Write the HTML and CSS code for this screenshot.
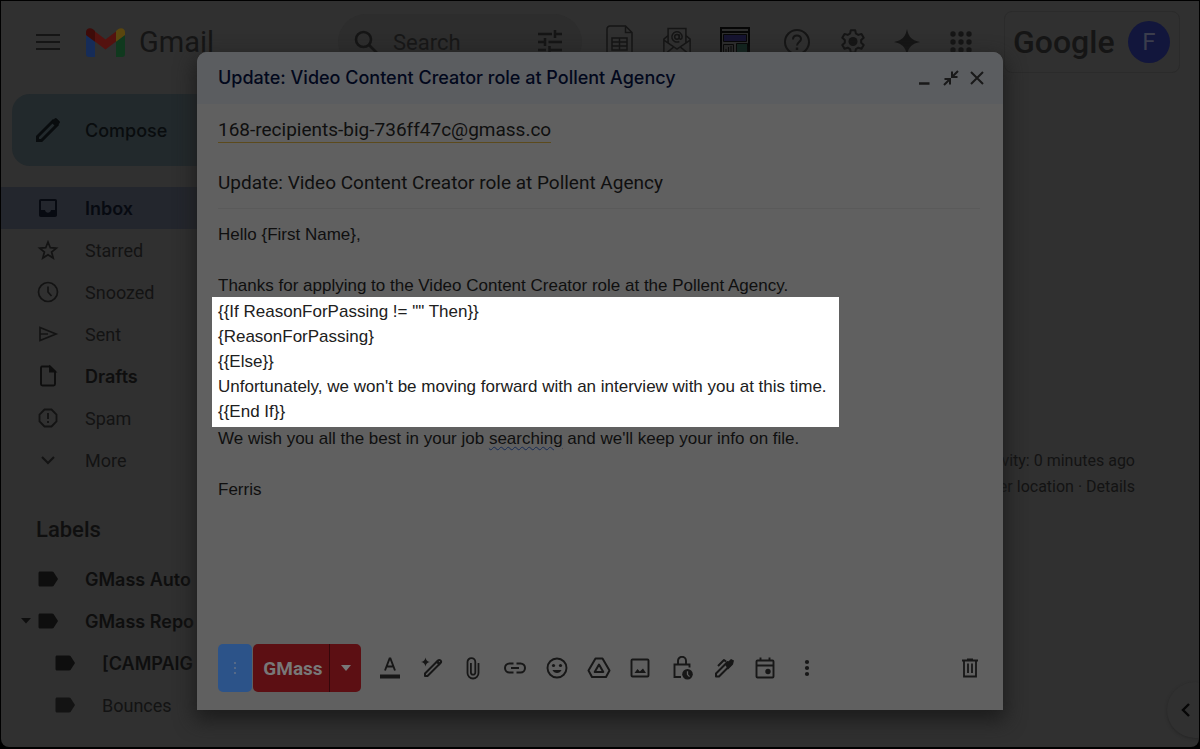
FILE: index.html
```html
<!DOCTYPE html>
<html lang="en">
<head>
<meta charset="utf-8">
<meta name="viewport" content="width=device-width, initial-scale=1">
<title>Gmail</title>
<link rel="stylesheet" href="styles.css">
</head>
<body>
<div class="frame">
<div class="app">
  <header class="topbar">
    <button class="icon-btn menu" aria-label="Main menu"><svg width="24" height="18" viewBox="0 0 24 18" fill="none" stroke="currentColor" stroke-width="2"><path d="M0 2h24M0 9h24M0 16h24"/></svg></button>
    <a class="brand" href="#">
      <svg width="39" height="29" viewBox="0 0 39 29"><path fill="#162c58" d="M0 7l9 6.500V29H3a3 3 0 0 1-3-3z"/><path fill="#10391e" d="M39 7l-9 6.500V29h6a3 3 0 0 0 3-3z"/><path fill="#54120f" d="M9 13.500V3.500l10.500 8 10.500-8v10L19.500 21.500z"/><path fill="#3e0b09" d="M0 4c0-3.500 4-5 7-2.700l2 1.700v10.700L0 7z"/><path fill="#5a460e" d="M39 4c0-3.500-4-5-7-2.700l-2 1.700v10.700L39 7z"/></svg>
      <span>Gmail</span>
    </a>
    <form class="search">
      <svg width="25" height="25" viewBox="0 0 25 25" fill="none" stroke="currentColor" stroke-width="2.600"><circle cx="9.500" cy="9.500" r="7.500"/><path d="M15 15l8.500 8.500"/></svg>
      <input type="text" placeholder="Search" aria-label="Search mail">
      <button class="icon-btn" type="button" aria-label="Search options"><svg width="24" height="24" viewBox="0 0 24 24" fill="none" stroke="currentColor" stroke-width="2.500"><path d="M0 4h14M17 4h7M17 0v8M0 12h7M7 8v8M10.500 12H24M0 20h8M11.500 20H24M11.500 16v8"/></svg></button>
    </form>
    <div class="tools extensions">
      <button class="icon-btn tool" aria-label="Spreadsheet"><svg width="27" height="34" viewBox="0 0 27 34" fill="none" stroke="currentColor" stroke-width="1.500"><path d="M4 1h15.500L26 7.500V30a3 3 0 0 1-3 3H4a3 3 0 0 1-3-3V4a3 3 0 0 1 3-3zM19.500 1v6.500H26M6 13h15v12H6zM6 17h15M6 21h15M13.500 13v12"/></svg></button>
      <button class="icon-btn tool" aria-label="Email campaign"><svg width="30" height="30" viewBox="0 0 30 32" fill="none" stroke="currentColor" stroke-width="1.600"><path d="M5.500 17V1.500h19V17M5.500 9L1 13v17h28V13l-4.500-4M1 14l14 9.500L29 14M1 30l11-9M29 30l-11-9"/><circle cx="15" cy="10.500" r="2.500"/><path d="M17.500 8v3.500c0 2.500 3 2 3-1a5.500 5.500 0 1 0-3 5"/></svg></button>
      <button class="icon-btn tool" aria-label="Dashboard"><svg width="30" height="30" viewBox="0 0 30 30"><path fill="#060606" d="M0 0h30v30H0z"/><path fill="#2e2e2e" d="M2 2h26v2H2zM2 6h26v22H2z"/><path fill="#161430" stroke="#080808" d="M3.500 7.500h23v7h-23z"/><path stroke="#080808" fill="#292929" d="M3.500 17.500h10v10h-10z"/><path fill="#12251f" stroke="#080808" d="M16.500 16.500h11v11h-11z"/><path stroke="#090909" d="M6 25v-3M8.500 25v-5M11 25v-6"/></svg></button>
    </div>
    <div class="tools">
      <button class="icon-btn tool" aria-label="Support"><svg width="26" height="26" viewBox="0 0 26 26" fill="none" stroke="currentColor" stroke-width="2"><circle cx="13" cy="13" r="12"/><path d="M9 10.500c0-5.500 8-5 8-.5 0 3-4 3-4 6.500"/><path d="M13 18.500v2.500" stroke-width="2.400"/></svg></button>
      <button class="icon-btn tool narrow" aria-label="Settings"><svg width="26" height="26" viewBox="0 0 26 26"><path fill="none" stroke="currentColor" stroke-width="2" stroke-linejoin="round" d="M10.800 1.200h4.400l.7 3.300 2.400 1.400 3.200-1 2.200 3.800-2.500 2.200v2.800l2.500 2.200-2.200 3.800-3.200-1-2.400 1.400-.7 3.300h-4.400l-.7-3.300-2.400-1.400-3.200 1-2.200-3.800 2.500-2.200v-2.800L2.300 8.700l2.200-3.800 3.200 1 2.400-1.400z"/><circle cx="13" cy="12.500" r="4.500" fill="currentColor"/></svg></button>
      <button class="icon-btn tool narrow" aria-label="Assistant"><svg width="26" height="26" viewBox="0 0 26 26" fill="currentColor"><path d="M13 0c1.500 8 5 11.500 13 13-8 1.500-11.500 5-13 13-1.500-8-5-11.500-13-13 8-1.500 11.500-5 13-13z"/></svg></button>
      <button class="icon-btn tool narrow" aria-label="Apps"><svg width="22" height="22" viewBox="0 0 22 22" fill="currentColor"><circle cx="3" cy="3" r="2.700"/><circle cx="11" cy="3" r="2.700"/><circle cx="19" cy="3" r="2.700"/><circle cx="3" cy="11" r="2.700"/><circle cx="11" cy="11" r="2.700"/><circle cx="19" cy="11" r="2.700"/><circle cx="3" cy="19" r="2.700"/><circle cx="11" cy="19" r="2.700"/><circle cx="19" cy="19" r="2.700"/></svg></button>
    </div>
    <div class="account"><span class="google">Google</span><button class="avatar" aria-label="Account">F</button></div>
  </header>

  <div class="columns">
    <aside class="sidebar">
      <button class="compose"><svg width="24" height="24" viewBox="0 0 24 24" fill="none" stroke="currentColor" stroke-width="3"><path d="M1.500 22.500v-4L17 3l4 4L5.500 22.500z"/><path fill="currentColor" stroke-width="1" d="M15.500 4L19 .8c.5-.5 1-.5 1.500 0l2.700 2.700c.5.500.5 1 0 1.500L20 8.500z"/></svg><span>Compose</span></button>
      <nav class="folders">
        <a class="row active" href="#"><svg width="24" height="24" viewBox="0 0 24 24"><path fill="currentColor" fill-rule="evenodd" d="M5 3h14c1.300 0 2 .8 2 2v14c0 1.200-.8 2-2 2H5c-1.300 0-2-.8-2-2V5c0-1.200.8-2 2-2zm0 2v9h4c.5 3.500 5.500 3.500 6 0h4V5z"/></svg><span>Inbox</span></a>
        <a class="row" href="#"><svg width="24" height="24" viewBox="0 0 24 24" fill="none" stroke="currentColor" stroke-width="1.700"><path d="M12 4l2.300 5.700 6 .4-4.700 3.900 1.600 6-5.200-3.300L6.800 20l1.600-6-4.700-3.900 6-.4z"/></svg><span>Starred</span></a>
        <a class="row" href="#"><svg width="24" height="24" viewBox="0 0 24 24" fill="none" stroke="currentColor" stroke-width="1.700"><circle cx="12" cy="12" r="9.500"/><path d="M12 6.500V12l3.500 4"/></svg><span>Snoozed</span></a>
        <a class="row" href="#"><svg width="24" height="24" viewBox="0 0 24 24" fill="none" stroke="currentColor" stroke-width="1.700"><path d="M4 5.500L20 12 4 18.500zM4 12h8"/></svg><span>Sent</span></a>
        <a class="row strong" href="#"><svg width="24" height="24" viewBox="0 0 24 24" fill="none" stroke="currentColor" stroke-width="1.900"><path d="M6 2.500h8l5 5V20c0 .8-.7 1.500-1.500 1.500h-11c-.8 0-1.500-.7-1.500-1.500V4c0-.8.4-1.500 1-1.500z"/><path fill="currentColor" d="M14 3v4.500h5z"/></svg><span>Drafts</span></a>
        <a class="row" href="#"><svg width="24" height="24" viewBox="0 0 24 24" fill="none" stroke="currentColor" stroke-width="1.800"><path d="M8.500 3.500h7l5 5v7l-5 5h-7l-5-5v-7z"/><path d="M12 7v6M12 15v2"/></svg><span>Spam</span></a>
        <a class="row" href="#"><svg width="24" height="24" viewBox="0 0 24 24" fill="none" stroke="currentColor" stroke-width="2"><path d="M6 9l6 6 6-6"/></svg><span>More</span></a>
      </nav>
      <h2 class="labels-title">Labels</h2>
      <nav class="labels">
        <a class="row strong" href="#"><svg width="24" height="24" viewBox="0 0 24 24" fill="currentColor"><path d="M4 4.500h12c.8 0 1.300.3 1.700.8L22 12l-4.300 6.700c-.4.500-.9.800-1.700.8H4c-.8 0-1.500-.7-1.500-1.500V6c0-.8.700-1.500 1.500-1.500z"/></svg><span>GMass Auto</span></a>
        <a class="row strong parent" href="#"><svg class="caret" width="10" height="6" viewBox="0 0 10 6" fill="currentColor"><path d="M0 0h10L5 5.500z"/></svg><svg width="24" height="24" viewBox="0 0 24 24" fill="currentColor"><path d="M4 4.500h12c.8 0 1.300.3 1.700.8L22 12l-4.300 6.700c-.4.500-.9.800-1.700.8H4c-.8 0-1.500-.7-1.500-1.500V6c0-.8.700-1.500 1.500-1.500z"/></svg><span>GMass Repo</span></a>
        <a class="row strong child" href="#"><svg width="24" height="24" viewBox="0 0 24 24" fill="currentColor"><path d="M4 4.500h12c.8 0 1.300.3 1.700.8L22 12l-4.300 6.700c-.4.500-.9.800-1.700.8H4c-.8 0-1.500-.7-1.500-1.500V6c0-.8.700-1.500 1.500-1.500z"/></svg><span>[CAMPAIG</span></a>
        <a class="row child" href="#"><svg width="24" height="24" viewBox="0 0 24 24" fill="currentColor"><path d="M4 4.500h12c.8 0 1.300.3 1.700.8L22 12l-4.300 6.700c-.4.500-.9.800-1.700.8H4c-.8 0-1.500-.7-1.500-1.500V6c0-.8.700-1.500 1.500-1.500z"/></svg><span>Bounces</span></a>
      </nav>
    </aside>
    <main class="mail">
      <p class="activity">activity: 0 minutes ago<br>other location · <a href="#">Details</a></p>
    </main>
  </div>

  <button class="side-toggle" aria-label="Show side panel"><svg width="9" height="14" viewBox="0 0 9 14" fill="none" stroke="currentColor" stroke-width="2.400"><path d="M8 1L2 7l6 6"/></svg></button>

  <section class="dialog" role="dialog" aria-labelledby="dialog-title">
    <header class="dialog-head">
      <h1 id="dialog-title">Update: Video Content Creator role at Pollent Agency</h1>
      <div class="window-btns">
        <button class="icon-btn" aria-label="Minimize"><svg width="16" height="16" viewBox="0 0 16 16" stroke="currentColor" stroke-width="2.500"><path d="M3 13.500h10.500"/></svg></button>
        <button class="icon-btn" aria-label="Exit full screen"><svg width="16" height="16" viewBox="0 0 16 16" fill="none" stroke="currentColor" stroke-width="2"><path d="M15 1L9.500 6.500M9 1.500V7h5.500M1 15l5.500-5.500M1.500 9H7v5.500"/></svg></button>
        <button class="icon-btn" aria-label="Close"><svg width="14" height="14" viewBox="0 0 14 14" stroke="currentColor" stroke-width="2"><path d="M1 1l12 12M13 1L1 13"/></svg></button>
      </div>
    </header>
    <div class="field recipients"><span class="address">168-recipients-big-736ff47c@gmass.co</span></div>
    <div class="field subject"><input type="text" aria-label="Subject" value="Update: Video Content Creator role at Pollent Agency"></div>
    <div class="message" role="textbox" aria-label="Message body" aria-multiline="true">
      <p>Hello {First Name},</p>
      <p class="para">Thanks for applying to the Video Content Creator role at the Pollent Agency.</p>
      <p class="spotlight">{{If ReasonForPassing != "" Then}}<br>{ReasonForPassing}<br>{{Else}}<br>Unfortunately, we won't be moving forward with an interview with you at this time.<br>{{End If}}</p>
      <p>We wish you all the best in your job <span class="grammar">searching</span> and we'll keep your info on file.</p>
      <p class="para">Ferris</p>
    </div>
    <footer class="toolbar">
      <button class="drag" aria-label="GMass options"><svg width="4" height="14" viewBox="0 0 4 14" fill="currentColor"><circle cx="2" cy="2" r="1.100"/><circle cx="2" cy="7" r="1.100"/><circle cx="2" cy="12" r="1.100"/></svg></button>
      <div class="gmass"><button class="send">GMass</button><button class="more" aria-label="GMass settings"><svg width="10" height="6" viewBox="0 0 10 6" fill="currentColor"><path d="M0 0h10L5 6z"/></svg></button></div>
      <div class="format">
        <button class="icon-btn" aria-label="Formatting options"><svg width="24" height="24" viewBox="0 0 24 24"><path fill="none" stroke="currentColor" stroke-width="1.900" d="M7 14.500L11.600 2.500h.8L17 14.500M8.700 10.500h6.600"/><path fill="currentColor" d="M2 18.500h20v4H2z"/></svg></button>
        <button class="icon-btn" aria-label="Help me write"><svg width="24" height="24" viewBox="0 0 24 24"><path fill="currentColor" d="M5.500 1.500c.7 3 1.500 3.800 4.500 4.500-3 .7-3.800 1.500-4.500 4.500C4.800 7.500 4 6.700 1 6c3-.7 3.800-1.500 4.500-4.500z"/><path fill="none" stroke="currentColor" stroke-width="2" stroke-linejoin="round" d="M5 17.500L18 4.500c.8-.8 1.700-.8 2.500 0s.8 1.700 0 2.500L7.500 20H5z"/><path stroke="currentColor" stroke-width="2.500" d="M16.500 5l3.500 3.500"/></svg></button>
        <button class="icon-btn" aria-label="Attach files"><svg width="24" height="24" viewBox="0 0 24 24" fill="none" stroke="currentColor" stroke-width="1.800"><path d="M17.500 7v10a5.500 5.500 0 0 1-11 0V6a3.900 3.900 0 0 1 7.800 0v10.500a2.200 2.200 0 0 1-4.400 0V7"/></svg></button>
        <button class="icon-btn" aria-label="Insert link"><svg width="24" height="24" viewBox="0 0 24 24" fill="none" stroke="currentColor" stroke-width="2"><path d="M10.500 7.500h-4a4.500 4.500 0 0 0 0 9h4M13.500 7.500h4a4.500 4.500 0 0 1 0 9h-4M8 12h8"/></svg></button>
        <button class="icon-btn" aria-label="Insert emoji"><svg width="24" height="24" viewBox="0 0 24 24"><circle cx="12" cy="12" r="9.500" fill="none" stroke="currentColor" stroke-width="1.900"/><circle cx="8.500" cy="9.500" r="1.600" fill="currentColor"/><circle cx="15.500" cy="9.500" r="1.600" fill="currentColor"/><path fill="currentColor" d="M7.500 14h9c-1.500 4-7.500 4-9 0z"/></svg></button>
        <button class="icon-btn" aria-label="Insert from Drive"><svg width="24" height="24" viewBox="0 0 24 24" fill="none" stroke="currentColor" stroke-width="2" stroke-linejoin="round"><path d="M8.500 2.500h7l7 12-3.500 6.500H5l-3.500-6.500zM12 8.500l4.300 7.500H7.700z"/></svg></button>
        <button class="icon-btn" aria-label="Insert photo"><svg width="24" height="24" viewBox="0 0 24 24"><rect x="3.500" y="3.500" width="17" height="17" rx="1" fill="none" stroke="currentColor" stroke-width="1.900"/><path fill="currentColor" d="M6.500 17l3-4 2.300 2.500L15 12.500l3 4.500z"/></svg></button>
        <button class="icon-btn" aria-label="Confidential mode"><svg width="24" height="24" viewBox="0 0 24 24"><path fill="none" stroke="currentColor" stroke-width="1.900" d="M11 21H4.500V8.500h15v3M8 8.500V4.800a4 4 0 0 1 8 0v3.700"/><circle cx="17.500" cy="18.300" r="5.300" fill="currentColor"/><path stroke="#606060" stroke-width="1.300" fill="none" d="M17.500 15.300v3.300l2 2"/></svg></button>
        <button class="icon-btn" aria-label="Insert signature"><svg width="24" height="24" viewBox="0 0 24 24"><path fill="none" stroke="currentColor" stroke-width="2" stroke-linejoin="round" d="M4 20.500v-3L15.500 6l3 3L7 20.500zM6 10l6-6 2 1.500"/><path fill="currentColor" d="M13 8.500l6-5.500 3 1.500-1 4-5 5z"/></svg></button>
        <button class="icon-btn" aria-label="Set up a time to meet"><svg width="24" height="24" viewBox="0 0 24 24"><path fill="none" stroke="currentColor" stroke-width="1.900" d="M4.500 4.500h15c.6 0 1 .4 1 1v15c0 .6-.4 1-1 1h-15c-.6 0-1-.4-1-1v-15c0-.6.4-1 1-1zM3.500 9.500h17M7.500 1.500v3M16.500 1.500v3"/><circle cx="15" cy="15.500" r="2.700" fill="currentColor"/></svg></button>
        <button class="icon-btn" aria-label="More options"><svg width="24" height="24" viewBox="0 0 24 24" fill="currentColor"><circle cx="12" cy="6" r="2.100"/><circle cx="12" cy="12" r="2.100"/><circle cx="12" cy="18" r="2.100"/></svg></button>
      </div>
      <button class="icon-btn trash" aria-label="Discard draft"><svg width="24" height="24" viewBox="0 0 24 24" fill="none" stroke="currentColor" stroke-width="1.800"><path d="M4 4.500h16M9 3.300h6M6 4.500V20.500h12V4.500M10 7.500v9.500M14 7.500v9.500"/></svg></button>
    </footer>
  </section>
</div>
</div>
</body>
</html>
```
FILE: styles.css
```css
* { box-sizing: border-box; }

body {
  margin: 0;
  background: #000;
  color: #0f0f0f;
  font-family: Roboto, "Liberation Sans", sans-serif;
  font-size: 18px;
}

h1, h2, p { margin: 0; font-weight: 400; }
a { color: inherit; text-decoration: none; }
button, input { font: inherit; color: inherit; border: 0; padding: 0; background: none; }
button { cursor: pointer; }
svg { display: block; flex: none; }

.frame {
  min-height: 100vh;
  padding: 1px 1px 2px;
  display: flex;
  background: #000;
}

.app {
  position: relative;
  flex: 1;
  display: flex;
  flex-direction: column;
  min-width: 0;
  overflow: hidden;
  background: #303030;
  border-radius: 0 0 8px 8px;
}

.icon-btn {
  display: flex;
  align-items: center;
  justify-content: center;
}

/* Top bar */
.topbar {
  display: flex;
  align-items: center;
  height: 82px;
  padding: 0 19px 0 35px;
  color: #151515;
}
.brand {
  display: flex;
  flex: none;
  align-items: center;
  gap: 14px;
  margin-left: 26px;
  width: 252px;
  font-size: 29px;
}
.search {
  display: flex;
  align-items: center;
  flex: 1;
  min-width: 0;
  height: 56px;
  padding: 0 20px 0 16px;
  gap: 14px;
  border-radius: 28px;
  background: #2d2d2d;
}
.search input { flex: 1; min-width: 0; font-size: 22px; outline: 0; }
.search input::placeholder { color: #171717; opacity: 1; }
.tools { display: flex; flex: none; }
.extensions { margin: 0 4px 0 8px; }
.tool { width: 58px; height: 58px; }
.tool.narrow { width: 54px; }
.account {
  display: flex;
  flex: none;
  align-items: center;
  justify-content: space-between;
  width: 176px;
  height: 62px;
  margin-left: 16px;
  padding: 0 9px 0 8px;
  border: 1px solid #2b2b2b;
  border-radius: 8px;
}
.google { font-size: 32px; font-weight: 500; }
.avatar {
  width: 42px;
  height: 42px;
  border-radius: 50%;
  background: #12163c;
  color: #3b3d4c;
  font-size: 24px;
}

/* Sidebar */
.columns { display: flex; flex: 1; }
.sidebar { width: 240px; padding-top: 11px; }
.compose {
  display: flex;
  align-items: center;
  gap: 25px;
  width: 220px;
  height: 72px;
  margin-left: 11px;
  padding-left: 24px;
  border-radius: 18px;
  background: #22292c;
  color: #090c0e;
  font-family: Inter, Roboto, sans-serif;
  font-weight: 500;
}
.folders { margin-top: 21px; }
.row {
  display: flex;
  align-items: center;
  gap: 25px;
  height: 42px;
  padding-left: 35px;
  color: #131313;
}
.row.active { background: #23262d; color: #070a11; font-family: Inter, Roboto, sans-serif; font-weight: 600; }
.row.strong { color: #0e0e0e; font-family: Inter, Roboto, sans-serif; font-weight: 600; }
.row.parent { padding-left: 20px; }
.row.parent .caret { margin-right: -20px; }
.row.child { padding-left: 52px; }
.labels-title { padding: 37px 0 16px 35px; font-size: 22px; line-height: 24px; font-weight: 500; }

/* Mail area */
.mail { flex: 1; padding: 365px 64px 0 0; }
.activity { text-align: right; font-size: 16px; line-height: 26px; color: #131313; }

.side-toggle {
  position: absolute;
  right: -24px;
  bottom: 9px;
  width: 56px;
  height: 56px;
  padding-left: 14px;
  border-radius: 50%;
  box-shadow: 0 1px 3px #262626;
  background: #303030;
  color: #060606;
}

/* Compose window */
.dialog {
  position: absolute;
  inset: 51px 196px 37px 196px;
  display: flex;
  flex-direction: column;
  background: #606060;
  border-radius: 10px 10px 0 0;
  box-shadow: 0 8px 20px 2px #1c1c1c;
}
.dialog-head {
  display: flex;
  align-items: center;
  justify-content: space-between;
  height: 52px;
  padding: 0 19px 0 21px;
  border-radius: 10px 10px 0 0;
  background: #5b5d60;
  color: #02081c;
}
.dialog-head h1 { font-family: Inter, Roboto, sans-serif; font-size: 18px; line-height: 24px; font-weight: 500; }
.window-btns { display: flex; gap: 11px; color: #191919; }

.field { display: flex; align-items: center; height: 52px; margin: 0 23px 0 21px; font-size: 19px; }
.address { line-height: 24px; border-bottom: 1px solid #5c4a1c; }
.subject { height: 53px; border-bottom: 1px solid #5a5a5a; }
.subject input { width: 100%; height: 30px; outline: 0; }

.message {
  flex: 1;
  display: flex;
  flex-direction: column;
  align-items: flex-start;
  gap: 1px;
  padding: 13px 21px 0;
  font-family: "Liberation Sans", Arial, sans-serif;
  font-size: 17px;
  line-height: 25px;
}
.message .para { margin-top: 25px; }
.spotlight {
  margin: -2px 0 -2px -6px;
  padding: 2px 12px 3px 6px;
  background: #fff;
  color: #202020;
}
.grammar {
  text-decoration: underline wavy #152a55 1px;
  text-underline-offset: 2px;
}

.toolbar { display: flex; align-items: center; padding: 0 21px 18px; color: #171717; }
.drag {
  display: flex;
  align-items: center;
  justify-content: center;
  width: 34px;
  height: 48px;
  border-radius: 5px;
  background: #2c5389;
  color: #60708a;
}
.gmass {
  display: flex;
  height: 48px;
  margin-left: 1px;
  border-radius: 5px;
  overflow: hidden;
  background: #5c0f13;
  color: #787878;
}
.send { width: 76px; padding-left: 4px; font-size: 19px; font-weight: 700; }
.more { display: flex; align-items: center; justify-content: center; width: 32px; border-left: 1px solid #35070a; }
.format { display: flex; flex: 1; max-width: 459px; margin-left: 8px; }
.format .icon-btn { flex: 1; height: 42px; }
.trash { margin-left: auto; }
```
